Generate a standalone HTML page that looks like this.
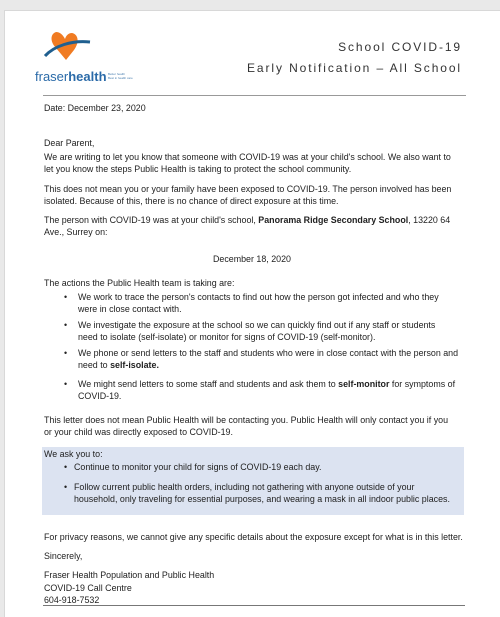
<!DOCTYPE html>
<html><head><style>
body{margin:0;width:500px;height:616px;background:#e9e9e9;position:relative;overflow:hidden;font-family:"Liberation Sans",sans-serif;color:#222}
.page{position:absolute;left:4px;top:10px;width:496px;height:606px;background:#fff;border-left:1px solid #d8d8d8;border-top:1px solid #d8d8d8}
.t{position:absolute;font-size:8.9px;white-space:nowrap;line-height:12px}
.h{position:absolute;right:38px;font-size:12px;letter-spacing:1.9px;color:#333;white-space:nowrap}
.b{position:absolute;left:64px}
</style></head><body>
<div class="page"></div>
<svg style="position:absolute;left:42px;top:30px" width="50" height="40" viewBox="0 0 50 40">
<path d="M14 2 C8 4 8 12 14 18 L24 30 L32 20 C38 12 36 4 30 3 C26 3 24 6 23 9 C21 5 18 2 14 2 Z" fill="#f07b22"/>
<path d="M3 26 C12 16 30 10 48 12" stroke="#1f5f8f" stroke-width="3" fill="none"/>
</svg>
<div class="t" style="left:35px;top:69px;font-size:13px;color:#2a6aa8;line-height:15px">fraser<b>health</b></div>
<div class="t" style="left:108px;top:72px;font-size:3px;color:#4a7fb0;line-height:4px">Better health<br>Best in health care</div>
<div class="h" style="top:40px">School COVID-19</div>
<div class="h" style="top:61px">Early Notification – All School</div>
<div style="position:absolute;left:43px;top:95px;width:423px;height:1px;background:#999"></div>
<div class="t" style="left:44px;top:102px">Date: December 23, 2020</div>
<div class="t" style="left:44px;top:137px">Dear Parent,</div>
<div class="t" style="left:44px;top:151px">We are writing to let you know that someone with COVID-19 was at your child's school. We also want to<br>let you know the steps Public Health is taking to protect the school community.</div>
<div class="t" style="left:44px;top:183px">This does not mean you or your family have been exposed to COVID-19. The person involved has been<br>isolated. Because of this, there is no chance of direct exposure at this time.</div>
<div class="t" style="left:44px;top:214px">The person with COVID-19 was at your child's school, <b>Panorama Ridge Secondary School</b>, 13220 64<br>Ave., Surrey on:</div>
<div class="t" style="left:213px;top:253px">December 18, 2020</div>
<div class="t" style="left:44px;top:277px">The actions the Public Health team is taking are:</div>
<div class="t b" style="top:291px">•</div><div class="t" style="left:78px;top:291px">We work to trace the person's contacts to find out how the person got infected and who they<br>were in close contact with.</div>
<div class="t b" style="top:319px">•</div><div class="t" style="left:78px;top:319px">We investigate the exposure at the school so we can quickly find out if any staff or students<br>need to isolate (self-isolate) or monitor for signs of COVID-19 (self-monitor).</div>
<div class="t b" style="top:347px">•</div><div class="t" style="left:78px;top:347px">We phone or send letters to the staff and students who were in close contact with the person and<br>need to <b>self-isolate.</b></div>
<div class="t b" style="top:378px">•</div><div class="t" style="left:78px;top:378px">We might send letters to some staff and students and ask them to <b>self-monitor</b> for symptoms of<br>COVID-19.</div>
<div class="t" style="left:44px;top:414px">This letter does not mean Public Health will be contacting you. Public Health will only contact you if you<br>or your child was directly exposed to COVID-19.</div>
<div style="position:absolute;left:42px;top:447px;width:422px;height:68px;background:#dce3f1"></div>
<div class="t" style="left:44px;top:448px">We ask you to:</div>
<div class="t b" style="top:461px">•</div><div class="t" style="left:74px;top:461px">Continue to monitor your child for signs of COVID-19 each day.</div>
<div class="t b" style="top:481px">•</div><div class="t" style="left:74px;top:481px">Follow current public health orders, including not gathering with anyone outside of your<br>household, only traveling for essential purposes, and wearing a mask in all indoor public places.</div>
<div class="t" style="left:44px;top:531px">For privacy reasons, we cannot give any specific details about the exposure except for what is in this letter.</div>
<div class="t" style="left:44px;top:550px">Sincerely,</div>
<div class="t" style="left:44px;top:569px;line-height:12.5px">Fraser Health Population and Public Health<br>COVID-19 Call Centre<br>604-918-7532</div>
<div style="position:absolute;left:43px;top:605px;width:422px;height:1px;background:#777"></div>
</body></html>
